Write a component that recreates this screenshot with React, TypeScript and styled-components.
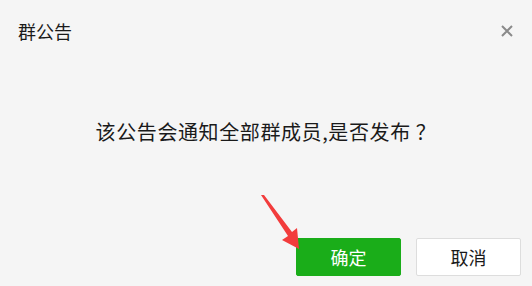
import React from "react";
import styled, { createGlobalStyle } from "styled-components";

const Global = createGlobalStyle`
  html, body { margin: 0; padding: 0; background: #f5f5f5; }
  body { font-family: "Microsoft YaHei", "Noto Sans CJK SC", "Noto Sans", sans-serif; }
  * { box-sizing: border-box; }
`;

const Dialog = styled.div`
  position: relative;
  width: 532px;
  height: 286px;
  background: #f5f5f5;
  display: flex;
  flex-direction: column;
`;

const Header = styled.div`
  display: flex;
  align-items: center;
  justify-content: space-between;
  height: 62px;
  padding: 0 18px 0 18px;
`;

const Title = styled.div`
  font-size: 18px;
  line-height: 18px;
  color: #1a1a1a;
`;

const Close = styled.button`
  width: 14px;
  height: 14px;
  padding: 0;
  border: 0;
  background: transparent;
  display: flex;
  align-items: center;
  justify-content: center;
  cursor: pointer;
`;

const Body = styled.div`
  flex: 1;
  display: flex;
  align-items: center;
  justify-content: center;
  padding-bottom: 36px;
`;

const Message = styled.div`
  font-size: 20px;
  line-height: 20px;
  color: #1a1a1a;
  letter-spacing: 0.6px;
`;

const Footer = styled.div`
  display: flex;
  justify-content: flex-end;
  gap: 15px;
  padding: 0 11px 10px 0;
`;

const Button = styled.button<{ $primary?: boolean }>`
  width: 105px;
  height: 38px;
  border-radius: 2px;
  font-family: inherit;
  font-size: 18px;
  cursor: pointer;
  border: 1px solid ${(p) => (p.$primary ? "#1aad19" : "#dddddd")};
  background: ${(p) => (p.$primary ? "#1aad19" : "#ffffff")};
  color: ${(p) => (p.$primary ? "#ffffff" : "#1a1a1a")};
`;

const Arrow = styled.svg`
  position: absolute;
  left: 0;
  top: 0;
  pointer-events: none;
`;

export default function App() {
  return (
    <>
      <Global />
      <Dialog>
        <Header>
          <Title>群公告</Title>
          <Close aria-label="close">
            <svg width="12" height="12" viewBox="0 0 12 12">
              <path d="M1 1L11 11M11 1L1 11" stroke="#8a8a8a" strokeWidth="2" />
            </svg>
          </Close>
        </Header>
        <Body>
          <Message>该公告会通知全部群成员,是否发布 ？</Message>
        </Body>
        <Footer>
          <Button $primary>确定</Button>
          <Button>取消</Button>
        </Footer>
        <Arrow width="532" height="286" viewBox="0 0 532 286">
          <polygon
            points="261,195 264,195 292,232 297,228 299,249 282,240 288,236"
            fill="#f23c3c"
          />
        </Arrow>
      </Dialog>
    </>
  );
}
